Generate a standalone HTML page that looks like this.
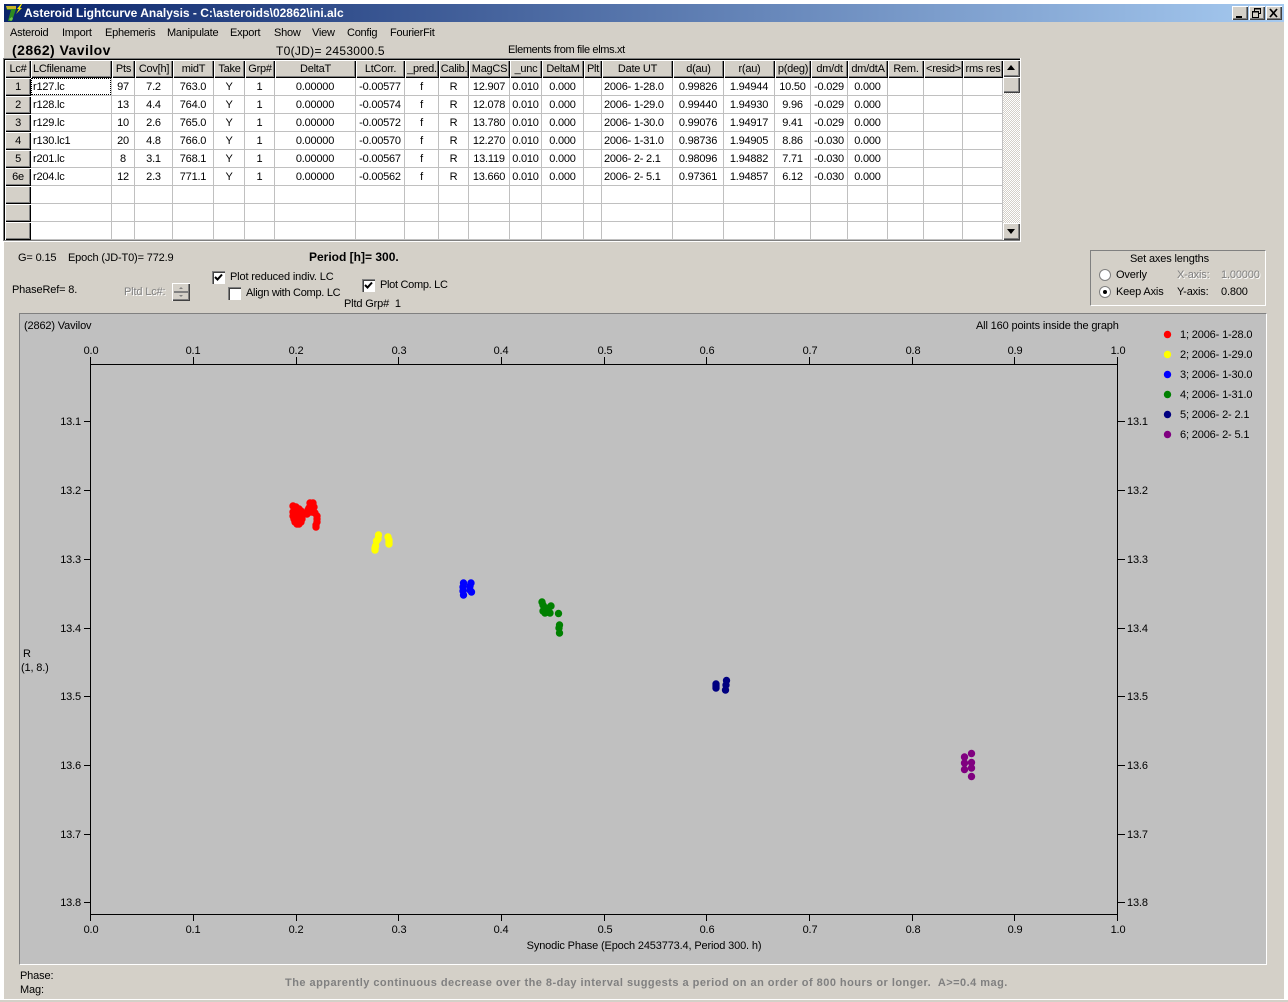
<!DOCTYPE html>
<html><head><meta charset="utf-8"><title>Asteroid Lightcurve Analysis</title>
<style>
html,body{margin:0;padding:0;background:#fff;width:1288px;height:1002px;overflow:hidden}
body{position:relative;font:11px/13px "Liberation Sans",sans-serif;color:#000}
.a{position:absolute}
.t{position:absolute;white-space:nowrap;line-height:13px;font-size:11px;letter-spacing:-.15px}
.m{letter-spacing:-.25px;top:27px}
.dis{color:#808080;text-shadow:1px 1px 0 #fff}
#win{position:absolute;left:4px;top:4px;width:1280px;height:995px;background:#d4d0c8}
#bot{position:absolute;left:0;top:999px;width:1288px;height:3px;background:#d4d0c8;border-top:1px solid #fff;box-sizing:border-box}
#title{position:absolute;left:4px;top:4px;width:1280px;height:18px;background:linear-gradient(90deg,#0a246a,#a6caf0)}
.btn{position:absolute;width:16px;height:14px;top:6px;background:#d4d0c8;box-shadow:inset 1px 1px 0 #fff,inset -1px -1px 0 #404040,inset -2px -2px 0 #808080}
table{position:absolute;left:5px;top:60px;border-collapse:separate;border-spacing:0;table-layout:fixed;width:998px;background:#fff}
td,th{height:18px;padding:0;box-sizing:border-box;font:normal 11px/13px "Liberation Sans",sans-serif;text-align:center;white-space:pre;overflow:hidden}
td{border-right:1px solid #c0c0c0;border-bottom:1px solid #c0c0c0;padding-top:1px;letter-spacing:-.22px}
th{background:#d4d0c8;letter-spacing:-.25px;box-shadow:inset 1px 1px 0 #fff,inset -1px -1px 0 #000,inset -2px -2px 0 #808080}
td.l{text-align:left;padding-left:2px}
.sb{position:absolute;left:1003px;width:17px;height:17px;background:#d4d0c8;box-shadow:inset 1px 1px 0 #fff,inset -1px -1px 0 #404040,inset -2px -2px 0 #808080}
.cb{position:absolute;width:13px;height:13px;background:#fff;box-sizing:border-box;box-shadow:inset 1px 1px 0 #808080,inset 2px 2px 0 #404040,inset -1px -1px 0 #fff}
svg circle{r:3.7px}
</style></head><body>
<div id="win"></div>
<div id="bot"></div>
<div id="title"></div>
<svg class="a" style="left:4px;top:4px" width="19" height="18" viewBox="0 0 19 18"><path d="M2 2H12V5L8 17H4L7 6H3Z" fill="#2e8a20"/><path d="M2 2H12V5H9L3 5Z" fill="#c8b428"/><path d="M5 15l3-2 1 2-2 2z" fill="#70c850"/><path d="M17 0L13 5H15L12 10L18 4H16L18 0Z" fill="#f8f000"/></svg>
<div class="t" style="left:24px;top:7px;color:#fff;font-weight:bold;font-size:12px;letter-spacing:0">Asteroid Lightcurve Analysis - C:\asteroids\02862\ini.alc</div>
<div class="btn" style="left:1232px"><svg class="a" style="left:0;top:0" width="16" height="14"><path d="M4 10h6v2H4z" fill="#000"/></svg></div>
<div class="btn" style="left:1249px"><svg class="a" style="left:0;top:0" width="16" height="14"><path d="M6 2.500h6M5.500 2v3M11.500 2v6M10 7.500h2M3 5.500h7M3.500 5v6.500M9.500 5v6.500M3 11.500h7" stroke="#000" fill="none" shape-rendering="crispEdges"/><path d="M6 3h6M3 6h7" stroke="#000" shape-rendering="crispEdges"/></svg></div>
<div class="btn" style="left:1266px"><svg class="a" style="left:0;top:0" width="16" height="14"><path d="M4 3l7 8M11 3l-7 8" stroke="#000" stroke-width="1.700" fill="none"/></svg></div>

<div class="t m" style="left:10px">Asteroid</div>
<div class="t m" style="left:62px">Import</div>
<div class="t m" style="left:105px">Ephemeris</div>
<div class="t m" style="left:167px">Manipulate</div>
<div class="t m" style="left:230px">Export</div>
<div class="t m" style="left:274px">Show</div>
<div class="t m" style="left:312px">View</div>
<div class="t m" style="left:347px">Config</div>
<div class="t m" style="left:390px">FourierFit</div>

<div class="t" style="left:12px;top:44px;font-weight:bold;font-size:14px;letter-spacing:.45px">(2862) Vavilov</div>
<div class="t" style="left:276px;top:45px;font-size:12px;letter-spacing:.3px">T0(JD)= 2453000.5</div>
<div class="t" style="left:508px;top:44px;letter-spacing:-.35px">Elements from file elms.xt</div>

<div class="a" style="left:3px;top:58px;width:1017px;height:183px;background:#808080;border-right:1px solid #fff;border-bottom:1px solid #fff"></div>
<div class="a" style="left:4px;top:59px;width:1016px;height:181px;background:#000"></div>
<div class="a" style="left:1003px;top:60px;width:17px;height:180px;background:repeating-conic-gradient(#fff 0 25%,#d4d0c8 0 50%) 0 0/2px 2px"></div>
<table>
<colgroup><col style="width:26px"><col style="width:81px"><col style="width:23px"><col style="width:38px"><col style="width:41px"><col style="width:31px"><col style="width:30px"><col style="width:81px"><col style="width:49px"><col style="width:34px"><col style="width:30px"><col style="width:41px"><col style="width:32px"><col style="width:42px"><col style="width:18px"><col style="width:71px"><col style="width:51px"><col style="width:51px"><col style="width:36px"><col style="width:37px"><col style="width:40px"><col style="width:36px"><col style="width:39px"><col style="width:40px"></colgroup>
<tr><th>Lc#</th><th style="text-align:left;padding-left:2px">LCfilename</th><th>Pts</th><th>Cov[h]</th><th>midT</th><th>Take</th><th>Grp#</th><th>DeltaT</th><th>LtCorr.</th><th>_pred.</th><th>Calib.</th><th>MagCS</th><th>_unc</th><th>DeltaM</th><th>Plt</th><th>Date UT</th><th>d(au)</th><th>r(au)</th><th>p(deg)</th><th>dm/dt</th><th>dm/dtA</th><th>Rem.</th><th>&lt;resid&gt;</th><th>rms res</th></tr>
<tr><th>1</th><td class="l">r127.lc</td><td>97</td><td>7.2</td><td>763.0</td><td>Y</td><td>1</td><td>0.00000</td><td>-0.00577</td><td>f</td><td>R</td><td>12.907</td><td>0.010</td><td>0.000</td><td></td><td class="l">2006- 1-28.0</td><td>0.99826</td><td>1.94944</td><td>10.50</td><td>-0.029</td><td>0.000</td><td></td><td></td><td></td></tr>
<tr><th>2</th><td class="l">r128.lc</td><td>13</td><td>4.4</td><td>764.0</td><td>Y</td><td>1</td><td>0.00000</td><td>-0.00574</td><td>f</td><td>R</td><td>12.078</td><td>0.010</td><td>0.000</td><td></td><td class="l">2006- 1-29.0</td><td>0.99440</td><td>1.94930</td><td>9.96</td><td>-0.029</td><td>0.000</td><td></td><td></td><td></td></tr>
<tr><th>3</th><td class="l">r129.lc</td><td>10</td><td>2.6</td><td>765.0</td><td>Y</td><td>1</td><td>0.00000</td><td>-0.00572</td><td>f</td><td>R</td><td>13.780</td><td>0.010</td><td>0.000</td><td></td><td class="l">2006- 1-30.0</td><td>0.99076</td><td>1.94917</td><td>9.41</td><td>-0.029</td><td>0.000</td><td></td><td></td><td></td></tr>
<tr><th>4</th><td class="l">r130.lc1</td><td>20</td><td>4.8</td><td>766.0</td><td>Y</td><td>1</td><td>0.00000</td><td>-0.00570</td><td>f</td><td>R</td><td>12.270</td><td>0.010</td><td>0.000</td><td></td><td class="l">2006- 1-31.0</td><td>0.98736</td><td>1.94905</td><td>8.86</td><td>-0.030</td><td>0.000</td><td></td><td></td><td></td></tr>
<tr><th>5</th><td class="l">r201.lc</td><td>8</td><td>3.1</td><td>768.1</td><td>Y</td><td>1</td><td>0.00000</td><td>-0.00567</td><td>f</td><td>R</td><td>13.119</td><td>0.010</td><td>0.000</td><td></td><td class="l">2006- 2- 2.1</td><td>0.98096</td><td>1.94882</td><td>7.71</td><td>-0.030</td><td>0.000</td><td></td><td></td><td></td></tr>
<tr><th>6e</th><td class="l">r204.lc</td><td>12</td><td>2.3</td><td>771.1</td><td>Y</td><td>1</td><td>0.00000</td><td>-0.00562</td><td>f</td><td>R</td><td>13.660</td><td>0.010</td><td>0.000</td><td></td><td class="l">2006- 2- 5.1</td><td>0.97361</td><td>1.94857</td><td>6.12</td><td>-0.030</td><td>0.000</td><td></td><td></td><td></td></tr>
<tr><th></th><td></td><td></td><td></td><td></td><td></td><td></td><td></td><td></td><td></td><td></td><td></td><td></td><td></td><td></td><td></td><td></td><td></td><td></td><td></td><td></td><td></td><td></td><td></td></tr>
<tr><th></th><td></td><td></td><td></td><td></td><td></td><td></td><td></td><td></td><td></td><td></td><td></td><td></td><td></td><td></td><td></td><td></td><td></td><td></td><td></td><td></td><td></td><td></td><td></td></tr>
<tr><th></th><td></td><td></td><td></td><td></td><td></td><td></td><td></td><td></td><td></td><td></td><td></td><td></td><td></td><td></td><td></td><td></td><td></td><td></td><td></td><td></td><td></td><td></td><td></td></tr>
</table>
<div class="a" style="left:31px;top:78px;width:80px;height:17px;box-sizing:border-box;border:1px dotted #000"></div>
<div class="sb" style="top:60px"><svg class="a" style="left:0;top:0" width="17" height="17"><path d="M8 5l-4 5h8z" fill="#000"/></svg></div>
<div class="sb" style="top:77px;height:16px"></div>
<div class="sb" style="top:223px"><svg class="a" style="left:0;top:0" width="17" height="17"><path d="M4 6h8l-4 5z" fill="#000"/></svg></div>

<div class="t" style="left:18px;top:252px">G= 0.15</div>
<div class="t" style="left:68px;top:252px">Epoch (JD-T0)= 772.9</div>
<div class="t" style="left:309px;top:251px;font-weight:bold;font-size:12px;letter-spacing:0">Period [h]= 300.</div>
<div class="t" style="left:12px;top:284px">PhaseRef= 8.</div>
<div class="t dis" style="left:124px;top:286px">Pltd Lc#:</div>
<div class="a" style="left:172px;top:283px;width:18px;height:18px;background:#d4d0c8;box-shadow:inset 1px 1px 0 #fff,inset -1px -1px 0 #404040,inset -2px -2px 0 #808080"><svg class="a" style="left:0;top:0" width="18" height="18"><path d="M2 8.500h14M2 9.500h14" stroke="#808080" shape-rendering="crispEdges"/><path d="M9 4l-2 2h4zM9 14l-2-2h4z" fill="#808080"/></svg></div>

<div class="cb" style="left:212px;top:271px"><svg class="a" style="left:0;top:0" width="13" height="13"><path d="M3 6l2.500 2.500L10 3.500" fill="none" stroke="#000" stroke-width="2"/></svg></div>
<div class="t" style="left:230px;top:271px">Plot reduced indiv. LC</div>
<div class="cb" style="left:228px;top:287px"></div>
<div class="t" style="left:246px;top:287px;letter-spacing:-.28px">Align with Comp. LC</div>
<div class="cb" style="left:362px;top:279px"><svg class="a" style="left:0;top:0" width="13" height="13"><path d="M3 6l2.500 2.500L10 3.500" fill="none" stroke="#000" stroke-width="2"/></svg></div>
<div class="t" style="left:380px;top:279px;letter-spacing:-.3px">Plot Comp. LC</div>
<div class="t" style="left:344px;top:298px;white-space:pre">Pltd Grp#  1</div>

<div class="a" style="left:1090px;top:250px;width:176px;height:56px;box-sizing:border-box;border:1px solid;border-color:#808080 #fff #fff #808080"></div>
<div class="t" style="left:1130px;top:253px">Set axes lengths</div>
<svg class="a" style="left:1098px;top:268px" width="14" height="32"><circle cx="7" cy="7" style="r:5.5px" fill="#fff" stroke="#808080"/><circle cx="7" cy="24" style="r:5.5px" fill="#fff" stroke="#808080"/><circle cx="7" cy="24" style="r:2px" fill="#000"/></svg>
<div class="t" style="left:1116px;top:269px">Overly</div>
<div class="t" style="left:1116px;top:286px">Keep Axis</div>
<div class="t dis" style="left:1177px;top:269px">X-axis:</div>
<div class="t dis" style="left:1221px;top:269px">1.00000</div>
<div class="t" style="left:1177px;top:286px">Y-axis:</div>
<div class="t" style="left:1221px;top:286px">0.800</div>

<div class="a" style="left:19px;top:313px;width:1248px;height:652px;box-sizing:border-box;background:#c0c0c0;border:1px solid;border-color:#808080 #fff #fff #808080"></div>
<svg class="a" style="left:0;top:0" width="1288" height="1002" font-family="'Liberation Sans',sans-serif" font-size="11" fill="#000" letter-spacing="-.15">
<path shape-rendering="crispEdges" stroke="#000" fill="none" d="M90.500 357V921M1117.500 357V921M90 364.500H1118M90 914.500H1118
M193.500 357V364M296.500 357V364M398.500 357V364M501.500 357V364M604.500 357V364M706.500 357V364M809.500 357V364M912.500 357V364M1014.500 357V364
M193.500 914V921M296.500 914V921M398.500 914V921M501.500 914V921M604.500 914V921M706.500 914V921M809.500 914V921M912.500 914V921M1014.500 914V921
M84 421.500H90M84 490.500H90M84 559.500H90M84 628.500H90M84 696.500H90M84 765.500H90M84 834.500H90M84 902.500H90
M1118 421.500H1125M1118 490.500H1125M1118 559.500H1125M1118 628.500H1125M1118 696.500H1125M1118 765.500H1125M1118 834.500H1125M1118 902.500H1125"/>
<g text-anchor="middle">
<text x="91" y="354">0.0</text><text x="193" y="354">0.1</text><text x="296" y="354">0.2</text><text x="399" y="354">0.3</text><text x="501" y="354">0.4</text><text x="605" y="354">0.5</text><text x="707" y="354">0.6</text><text x="810" y="354">0.7</text><text x="913" y="354">0.8</text><text x="1015" y="354">0.9</text><text x="1118" y="354">1.0</text>
<text x="91" y="933">0.0</text><text x="193" y="933">0.1</text><text x="296" y="933">0.2</text><text x="399" y="933">0.3</text><text x="501" y="933">0.4</text><text x="605" y="933">0.5</text><text x="707" y="933">0.6</text><text x="810" y="933">0.7</text><text x="913" y="933">0.8</text><text x="1015" y="933">0.9</text><text x="1118" y="933">1.0</text>
<text x="644" y="949">Synodic Phase (Epoch 2453773.4, Period 300. h)</text>
</g>
<g text-anchor="end">
<text x="81" y="425">13.1</text><text x="81" y="494">13.2</text><text x="81" y="563">13.3</text><text x="81" y="632">13.4</text><text x="81" y="700">13.5</text><text x="81" y="769">13.6</text><text x="81" y="838">13.7</text><text x="81" y="906">13.8</text>
</g>
<g>
<text x="1127" y="425">13.1</text><text x="1127" y="494">13.2</text><text x="1127" y="563">13.3</text><text x="1127" y="632">13.4</text><text x="1127" y="700">13.5</text><text x="1127" y="769">13.6</text><text x="1127" y="838">13.7</text><text x="1127" y="906">13.8</text>
<text x="24" y="329">(2862) Vavilov</text>
<text x="976" y="329">All 160 points inside the graph</text>
<text x="23" y="657">R</text><text x="21" y="671">(1, 8.)</text>
<text x="1180" y="338">1; 2006- 1-28.0</text>
<text x="1180" y="358">2; 2006- 1-29.0</text>
<text x="1180" y="378">3; 2006- 1-30.0</text>
<text x="1180" y="398">4; 2006- 1-31.0</text>
<text x="1180" y="418">5; 2006- 2- 2.1</text>
<text x="1180" y="438">6; 2006- 2- 5.1</text>
</g>
<circle cx="1167.500" cy="334.500" fill="#f00"/>
<circle cx="1167.500" cy="354.500" fill="#ff0"/>
<circle cx="1167.500" cy="374.500" fill="#00f"/>
<circle cx="1167.500" cy="394.500" fill="#008000"/>
<circle cx="1167.500" cy="414.500" fill="#000080"/>
<circle cx="1167.500" cy="434.500" fill="#800080"/>
<g fill="#f00">
<circle cx="293" cy="506"/><circle cx="296" cy="507"/><circle cx="299" cy="509"/><circle cx="301" cy="511"/><circle cx="303" cy="514"/><circle cx="293" cy="516"/><circle cx="294" cy="519"/><circle cx="293" cy="512"/><circle cx="296" cy="514"/><circle cx="298" cy="518"/><circle cx="295" cy="522"/><circle cx="297" cy="524"/><circle cx="299" cy="524"/><circle cx="301" cy="522"/><circle cx="302" cy="519"/><circle cx="300" cy="515"/><circle cx="297" cy="510"/><circle cx="300" cy="520"/><circle cx="296" cy="520"/><circle cx="302" cy="516"/>
<circle cx="310" cy="503"/><circle cx="313" cy="503"/><circle cx="311" cy="507"/><circle cx="313" cy="510"/><circle cx="310" cy="512"/><circle cx="307" cy="514"/><circle cx="315" cy="513"/><circle cx="317" cy="516"/><circle cx="317" cy="519"/><circle cx="317" cy="522"/><circle cx="316" cy="525"/><circle cx="316" cy="527"/><circle cx="309" cy="508"/><circle cx="312" cy="512"/><circle cx="308" cy="510"/><circle cx="311" cy="505"/><circle cx="314" cy="507"/>
</g>
<g fill="#ff0">
<circle cx="378.500" cy="535"/><circle cx="378" cy="539"/><circle cx="376.500" cy="541"/><circle cx="375" cy="548"/><circle cx="375" cy="550"/><circle cx="375.500" cy="546"/><circle cx="388" cy="537"/><circle cx="389" cy="540"/><circle cx="389" cy="542"/><circle cx="389" cy="544"/>
</g>
<g fill="#00f">
<circle cx="463.500" cy="583"/><circle cx="463" cy="587"/><circle cx="463" cy="591"/><circle cx="463.500" cy="595"/><circle cx="471" cy="583"/><circle cx="470" cy="586"/><circle cx="470" cy="590"/><circle cx="471.500" cy="592"/>
</g>
<g fill="#008000">
<circle cx="542" cy="602"/><circle cx="543" cy="605"/><circle cx="543" cy="611"/><circle cx="545" cy="613"/><circle cx="548" cy="610"/><circle cx="551" cy="606"/><circle cx="550" cy="613"/><circle cx="546" cy="608"/><circle cx="558.500" cy="613.500"/><circle cx="559.500" cy="625"/><circle cx="559" cy="628"/><circle cx="559.500" cy="633"/>
</g>
<g fill="#000080">
<circle cx="716" cy="684"/><circle cx="716" cy="688"/><circle cx="716" cy="686"/><circle cx="726.500" cy="680.500"/><circle cx="726" cy="685"/><circle cx="725.500" cy="690"/>
</g>
<g fill="#800080">
<circle cx="971.500" cy="753.500"/><circle cx="964.500" cy="757"/><circle cx="964.500" cy="763"/><circle cx="964.500" cy="769.500"/><circle cx="971.500" cy="762.500"/><circle cx="971.500" cy="768"/><circle cx="971.500" cy="776.500"/>
</g>
</svg>

<div class="t" style="left:20px;top:970px">Phase:</div>
<div class="t" style="left:20px;top:984px">Mag:</div>
<div class="t" style="left:285px;top:977px;font-weight:bold;color:#808080;letter-spacing:.47px">The apparently continuous decrease over the 8-day interval suggests a period on an order of 800 hours or longer.&nbsp; A&gt;=0.4 mag.</div>
</body></html>
